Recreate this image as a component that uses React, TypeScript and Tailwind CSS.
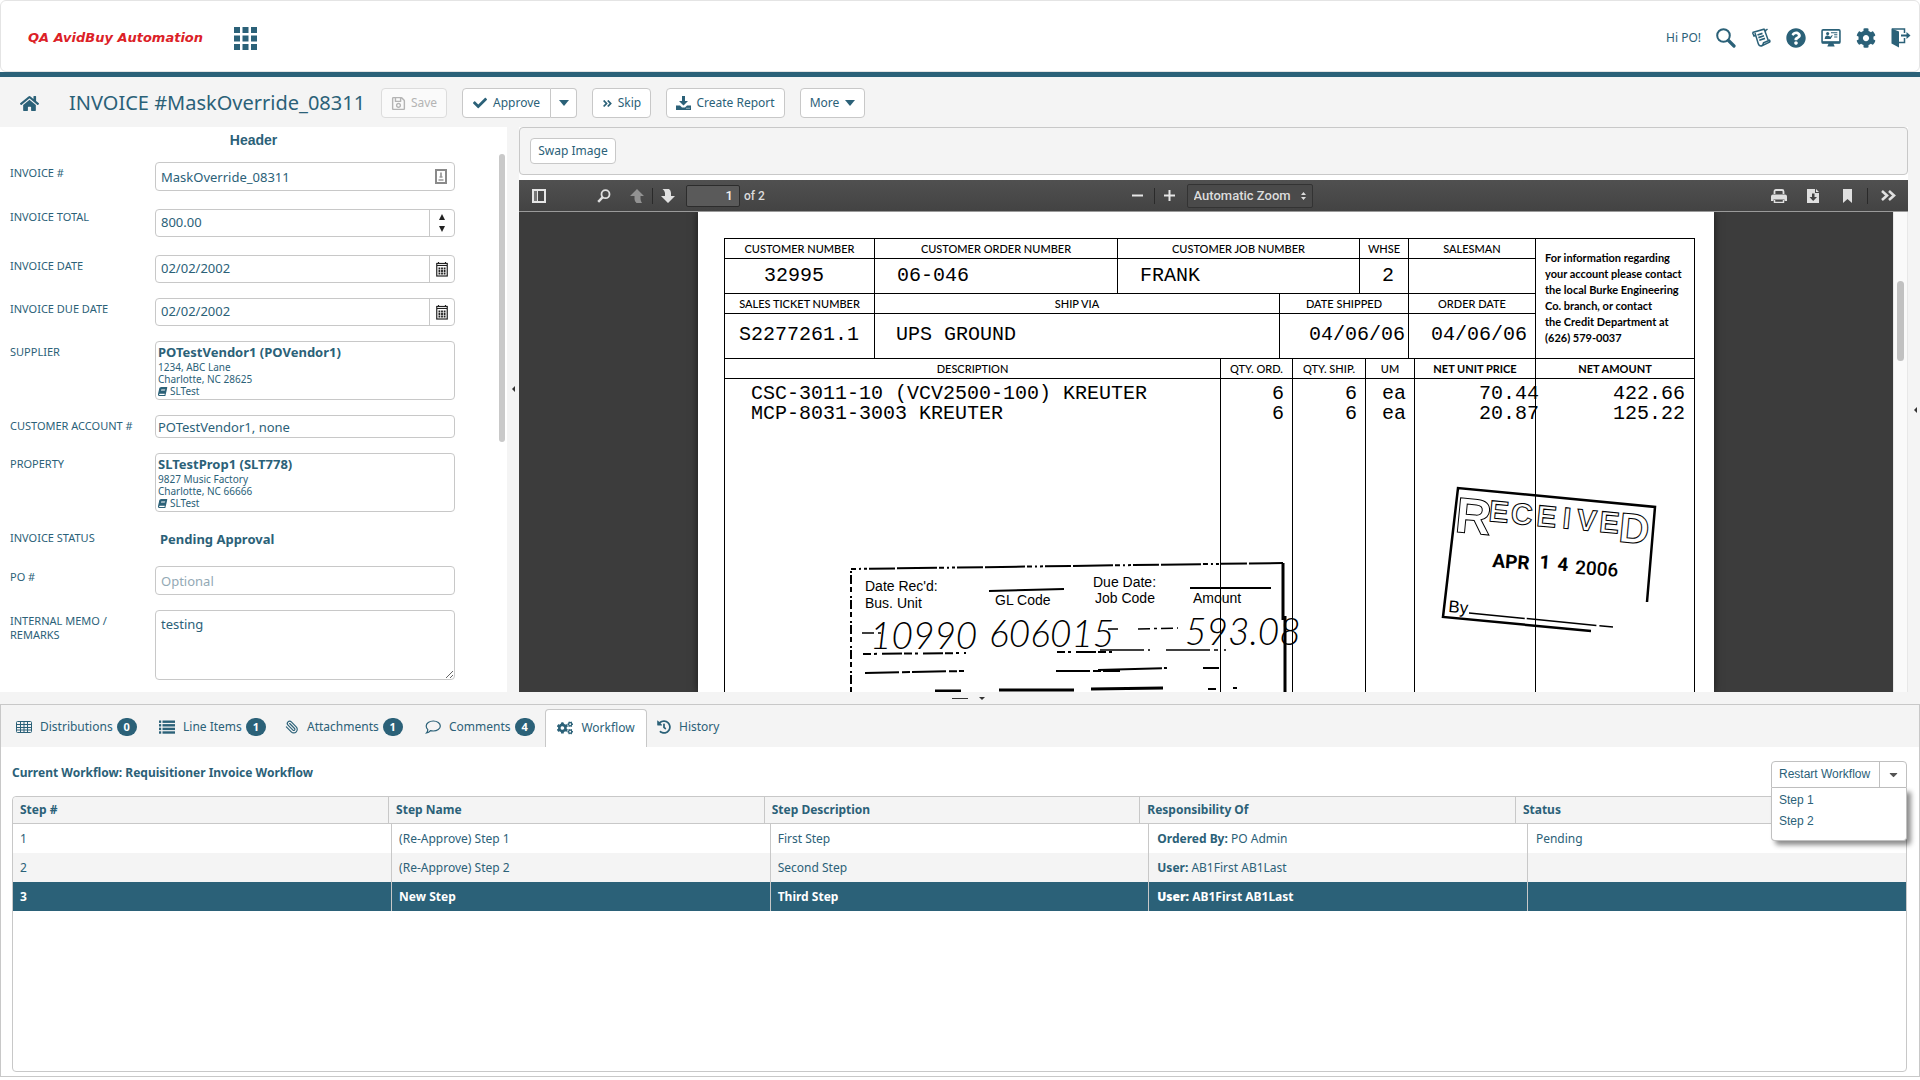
import React from "react";
import {
  FaHome,
  FaRegSave,
  FaCheck,
  FaAngleDoubleRight,
  FaCogs,
  FaHistory,
  FaBook,
  FaQuestionCircle,
  FaCog,
  FaCaretDown,
} from "react-icons/fa";
import { Paperclip } from "lucide-react";

type IconProps = { className?: string };

const GridIcon = ({ className }: IconProps) => (
  <svg viewBox="0 0 23 23" className={className} fill="currentColor">
    {[0, 8.5, 17].map((y) => [0, 8.5, 17].map((x) => <rect key={`${x}-${y}`} x={x} y={y} width="6" height="6" />))}
  </svg>
);

const SearchIcon = ({ className }: IconProps) => (
  <svg viewBox="0 0 20 20" className={className} fill="none" stroke="currentColor">
    <circle cx="7.5" cy="7.5" r="6.3" strokeWidth="2" />
    <path d="M12.5 12.5 18 18" strokeWidth="3.2" strokeLinecap="round" />
  </svg>
);

const ScrollIcon = ({ className }: IconProps) => (
  <svg viewBox="0 0 20 20" className={className} fill="none" stroke="currentColor" strokeWidth="1.5">
    <path d="M1.500 4.500 3 8l1.500-.5M1.500 4.500 13 1.200l2 2.300M4 5l3.200 10.500q.8 2.800 3.300 2.500l8-3.800q.8-.7 0-2l-6 2.600q-.5 3-2.500 3.200M13.500 2l2 5.500 1.700 4.700M13.500 3.500l3-2.500" />
    <path d="m6.500 7 5-1.600M7.400 9.600l5.600-1.800M8.300 12.200l5.700-1.800" strokeWidth="1.700" />
  </svg>
);

const MonitorIcon = ({ className }: IconProps) => (
  <svg viewBox="0 0 19 19" className={className} fill="none" stroke="currentColor">
    <rect x="1" y="1.800" width="17" height="12.400" rx="1" strokeWidth="1.500" />
    <path d="M1 13.500h17" strokeWidth="2" />
    <path d="M7.500 14h4l1.500 3.500H6z" fill="currentColor" stroke="none" />
    <circle cx="6.300" cy="5.300" r="1.500" fill="currentColor" stroke="none" />
    <path d="M3.500 10.500q.3-3.500 3-3.300l2.500 1.200 1.500-1.800.6.600-2 3.300z" fill="currentColor" stroke="none" />
    <path d="M9.500 4.500h6M12.500 6.500h3M12.500 8.500h3" strokeWidth="1" />
  </svg>
);

const ExitIcon = ({ className }: IconProps) => (
  <svg viewBox="0 0 20 20" className={className} fill="none" stroke="currentColor">
    <path d="M.5.500 8 3.500V19.500L.5 15.500z" fill="currentColor" stroke="none" />
    <path d="M1 1h12.500v4M13.500 10v4.500H8" strokeWidth="1.500" />
    <path d="M10 7.500h7" strokeWidth="2" />
    <path d="m15.500 4 4 3.500-4 3.500z" fill="currentColor" stroke="none" />
  </svg>
);

const DownloadTrayIcon = ({ className }: IconProps) => (
  <svg viewBox="0 0 15 15" className={className} fill="currentColor">
    <path d="M6 0h3v5h3L7.500 9.500 3 5h3z" />
    <path d="M0 9.500h4l2 2h3l2-2h4V14H0zM10.500 11.700v1h1v-1zm2 0v1h1v-1z" fillRule="evenodd" />
  </svg>
);

const TableGridIcon = ({ className }: IconProps) => (
  <svg viewBox="0 0 16 14" className={className} fill="none" stroke="currentColor" strokeWidth="1">
    <rect x=".5" y="1.500" width="15" height="11" rx="1" />
    <path d="M.5 4.500h15M.5 7.500h15M.5 10h15M4.500 1.500v11M8 1.500v11M11.500 1.500v11" />
  </svg>
);

const ListIcon = ({ className }: IconProps) => (
  <svg viewBox="0 0 16 14" className={className} fill="currentColor">
    {[0.5, 4.1, 7.7, 11.3].map((y) => (
      <g key={y}>
        <rect x="0" y={y} width="2.200" height="2.400" />
        <rect x="3.500" y={y} width="12.500" height="2.400" />
      </g>
    ))}
  </svg>
);

const BubbleIcon = ({ className }: IconProps) => (
  <svg viewBox="0 0 16 14" className={className} fill="none" stroke="currentColor" strokeWidth="1.200">
    <path d="M8.300 1C12.300 1 15.300 3.200 15.300 6s-3 5-7 5q-1.500 0-2.800-.4Q3.800 12.700 1.500 13q1.200-1.200 1.300-3.400Q1.200 8.100 1.200 6c0-2.800 3.100-5 7.100-5z" />
  </svg>
);

const CalendarIcon = ({ className }: IconProps) => (
  <svg viewBox="0 0 12 15" className={className} fill="none" stroke="#222">
    <rect x=".75" y="1.500" width="10.500" height="12.500" strokeWidth="1.200" />
    <path d="M1 3.500h10M2.500 0v2M9.500 0v2" strokeWidth="1.200" />
    <path d="M2.500 6.500h7M2.500 9h7M2.500 11.500h7" strokeWidth="1.800" strokeDasharray="1.800 .8" />
  </svg>
);

const ContactCardIcon = ({ className }: IconProps) => (
  <svg viewBox="0 0 12 15" className={className} fill="none">
    <rect x="1" y="1" width="10" height="13" fill="#fff" stroke="#8a8a8a" strokeWidth="2" />
    <path d="M6 3.500v5M4.500 8h3M3.500 11h5" stroke="#999" strokeWidth="1.700" />
  </svg>
);

const SidebarIcon = ({ className }: IconProps) => (
  <svg viewBox="0 0 14 14" className={className} fill="none">
    <rect x="1" y="1" width="12" height="12" stroke="#e6e6e6" strokeWidth="2" />
    <path d="M5.500 1v12" stroke="#e6e6e6" />
    <rect x="2" y="2" width="3" height="10" fill="#777" />
  </svg>
);

const FindIcon = ({ className }: IconProps) => (
  <svg viewBox="0 0 14 14" className={className} fill="none" stroke="#e0e0e0">
    <circle cx="8.500" cy="5.200" r="4" strokeWidth="1.800" />
    <path d="M5.500 8.300 1.200 12.800" strokeWidth="2.400" />
  </svg>
);

const PageUpIcon = ({ className }: IconProps) => (
  <svg viewBox="0 0 14 14" className={className} fill="#929292">
    <path d="M7 0 14 7h-3.500v3q.2 2.500 1.500 4H6.500q-2-1.500-2-4V7H0z" />
  </svg>
);

const PageDownIcon = ({ className }: IconProps) => (
  <svg viewBox="0 0 14 14" className={className} fill="#e0e0e0">
    <path d="M7 14 0 7h4V4Q3.700 1.500 1.500 0H8q2 1.500 2 4v3h4z" />
  </svg>
);

const PrinterIcon = ({ className }: IconProps) => (
  <svg viewBox="0 0 16 14" className={className}>
    <path d="M3.500 5V2.500q0-1.500 1.500-1.500h6q1.500 0 1.500 1.500V5" fill="none" stroke="#e0e0e0" strokeWidth="1.800" />
    <path d="M0 7.500q0-2 2-2h12q2 0 2 2V12h-2.500V10.500h-11V12H0z" fill="#e0e0e0" />
    <path d="M3.500 11v2.500h9V11" fill="none" stroke="#e0e0e0" strokeWidth="1.500" />
  </svg>
);

const SaveFileIcon = ({ className }: IconProps) => (
  <svg viewBox="0 0 12 14" className={className}>
    <path d="M0 0h8v4h4v10H0zM9 0l3 3H9z" fill="#e0e0e0" />
    <path d="M5 4.500h2.500V8H10l-3.800 4L2.500 8H5z" fill="#444" />
  </svg>
);

const BookmarkIcon = ({ className }: IconProps) => (
  <svg viewBox="0 0 9 14" className={className}>
    <path d="M0 0h9v14L4.500 10 0 14z" fill="#e0e0e0" />
  </svg>
);

const ToolsIcon = ({ className }: IconProps) => (
  <svg viewBox="0 0 15 11" className={className} fill="none" stroke="#e0e0e0" strokeWidth="2.600">
    <path d="m1 1 5 4.500-5 4.500M8 1l5 4.500L8 10" />
  </svg>
);

const DownTriangle = () => (
  <svg viewBox="0 0 10 6" className="h-[6px] w-[10px]" fill="currentColor">
    <path d="M0 0h10L5 6z" />
  </svg>
);

const btn =
  "flex items-center justify-center rounded border border-[#c8c8c8] bg-white text-[12px] text-[#2b6178] whitespace-nowrap";
const field = "w-full rounded border border-[#c8c8c8] bg-white px-[5px] text-[13px] text-[#2b6178] outline-none";

function TopBar() {
  return (
    <header className="border-b-[5px] border-[#2b6178] bg-white">
      <div className="flex h-[72px] items-center rounded-md border border-[#e4e4e4] pt-1 pr-2 pl-[27px]">
        <span className="w-[206px] text-[13px] font-bold whitespace-nowrap text-[#dc2127] italic font-['DejaVu_Sans']">
          QA AvidBuy Automation
        </span>
        <button aria-label="Applications" className="text-[#2b6178]">
          <GridIcon className="size-[23px]" />
        </button>
        <nav className="ml-auto flex items-center gap-[15px] text-[#2b6178]">
          <span className="text-[12px]">Hi PO!</span>
          <button aria-label="Search"><SearchIcon className="size-5" /></button>
          <button aria-label="Notes"><ScrollIcon className="size-5" /></button>
          <button aria-label="Help"><FaQuestionCircle className="size-5" /></button>
          <button aria-label="Training"><MonitorIcon className="size-5" /></button>
          <button aria-label="Settings"><FaCog className="size-5" /></button>
          <button aria-label="Log out"><ExitIcon className="size-5" /></button>
        </nav>
      </div>
    </header>
  );
}

function ActionBar() {
  return (
    <div className="flex h-[50px] items-center pt-[2px] pl-5">
      <a href="#home" aria-label="Home" className="text-[#2b6178]">
        <FaHome className="size-[19px]" />
      </a>
      <h1 className="ml-[30px] w-[312px] text-[20px] whitespace-nowrap text-[#2b6178]">INVOICE #MaskOverride_08311</h1>
      <div className="flex gap-[15px]">
        <button
          disabled
          className="flex h-[30px] w-[66px] items-center justify-center gap-[5px] rounded border border-[#dcdcdc] bg-[#fafafa] text-[12px] text-[#b4b4b4]"
        >
          <FaRegSave className="size-[15px]" /> Save
        </button>
        <div className="flex">
          <button className={`${btn} h-[30px] w-[89px] gap-[6px] rounded-r-none`}>
            <FaCheck className="size-[14px]" /> Approve
          </button>
          <button aria-label="More approve options" className={`${btn} h-[30px] w-[26px] rounded-l-none border-l-0`}>
            <DownTriangle />
          </button>
        </div>
        <button className={`${btn} h-[30px] w-[59px] gap-[5px]`}>
          <FaAngleDoubleRight className="size-[11px]" /> Skip
        </button>
        <button className={`${btn} h-[30px] w-[119px] gap-[5px]`}>
          <DownloadTrayIcon className="size-[15px]" /> Create Report
        </button>
        <button className={`${btn} h-[30px] w-[65px] gap-[6px]`}>
          More <DownTriangle />
        </button>
      </div>
    </div>
  );
}

function Row({ label, id, children, tight }: { label: string; id?: string; children: React.ReactNode; tight?: boolean }) {
  const cls = `text-[11px] leading-[14px] pr-[18px] ${tight ? "pt-px" : "pt-1"}`;
  return (
    <div className="grid grid-cols-[145px_300px] items-start">
      {id ? (
        <label htmlFor={id} className={cls}>{label}</label>
      ) : (
        <span className={cls}>{label}</span>
      )}
      {children}
    </div>
  );
}

function PartyCard({ name, lines }: { name: string; lines: string[] }) {
  return (
    <div className="h-[59px] rounded border border-[#c8c8c8] px-[2px] pt-[2px]">
      <div className="text-[13px] leading-[17px] font-bold">{name}</div>
      {lines.map((l) => (
        <div key={l} className="text-[10px] leading-3">{l}</div>
      ))}
      <div className="flex items-center gap-[3px] text-[10px] leading-3">
        <FaBook className="size-[9px] -skew-x-12" /> SLTest
      </div>
    </div>
  );
}

function DateField({ id }: { id: string }) {
  return (
    <div className="flex h-7 rounded border border-[#c8c8c8]">
      <input id={id} defaultValue="02/02/2002" className="min-w-0 flex-1 px-[5px] text-[13px] outline-none" />
      <button aria-label="Open calendar" className="flex w-[25px] items-center justify-center border-l border-[#c8c8c8]">
        <CalendarIcon className="h-[15px] w-3" />
      </button>
    </div>
  );
}

function InvoiceForm() {
  return (
    <section className="relative w-[507px] shrink-0 bg-white pt-[3px] pb-3 pl-[10px] text-[#2b6178]">
      <h2 className="pr-[10px] text-center text-[14px] leading-5 font-bold font-['Liberation_Sans']">Header</h2>
      <div className="mt-3 flex flex-col gap-[15px]">
        <div className="flex flex-col gap-[18px]">
          <Row label="INVOICE #" id="inv">
            <div className="relative">
              <input id="inv" defaultValue="MaskOverride_08311" className={`${field} block h-[29px]`} />
              <ContactCardIcon className="absolute top-[7px] right-2 h-[15px] w-3" />
            </div>
          </Row>
          <Row label="INVOICE TOTAL" id="total" tight>
            <div className="flex h-7 overflow-hidden rounded border border-[#c8c8c8]">
              <input id="total" defaultValue="800.00" className="min-w-0 flex-1 px-[5px] text-[13px] outline-none" />
              <div className="flex w-[25px] flex-col items-center justify-center gap-[6px] border-l border-[#c8c8c8]">
                <button aria-label="Increase">
                  <svg viewBox="0 0 6 6" className="block size-[6px]" fill="#222"><path d="M3 0l3 6H0z" /></svg>
                </button>
                <button aria-label="Decrease">
                  <svg viewBox="0 0 6 6" className="block size-[6px]" fill="#222"><path d="M3 6l3-6H0z" /></svg>
                </button>
              </div>
            </div>
          </Row>
          <Row label="INVOICE DATE" id="date">
            <DateField id="date" />
          </Row>
        </div>
        <Row label="INVOICE DUE DATE" id="due">
          <DateField id="due" />
        </Row>
        <Row label="SUPPLIER">
          <PartyCard name="POTestVendor1 (POVendor1)" lines={["1234, ABC Lane", "Charlotte, NC 28625"]} />
        </Row>
        <Row label="CUSTOMER ACCOUNT #" id="acct">
          <input id="acct" defaultValue="POTestVendor1, none" className="h-[23px] w-full rounded border border-[#c8c8c8] px-[2px] text-[13px] outline-none" />
        </Row>
        <Row label="PROPERTY">
          <PartyCard name="SLTestProp1 (SLT778)" lines={["9827 Music Factory", "Charlotte, NC 66666"]} />
        </Row>
        <Row label="INVOICE STATUS">
          <div className="px-[5px] text-[13px] leading-6 font-bold">Pending Approval</div>
        </Row>
        <Row label="PO #" id="po">
          <input id="po" placeholder="Optional" className={`${field} h-[29px] placeholder:text-[#93a9b5]`} />
        </Row>
        <Row label="INTERNAL MEMO / REMARKS" id="memo">
          <textarea id="memo" defaultValue="testing" className={`${field} block h-[70px] py-1 leading-[18px]`} />
        </Row>
      </div>
      <div className="absolute top-[27px] right-[2px] h-[288px] w-[6px] rounded-full bg-[#c9c9c9]" />
    </section>
  );
}

function ViewerToolbar() {
  const sep = "h-4 w-px bg-[#2a2a2a]";
  return (
    <div className="flex h-8 shrink-0 items-center border-b border-[#9a9a9a] bg-linear-to-b from-[#505050] to-[#434343] pr-3 pl-[13px] text-[13px] font-medium text-[#dcdcdc] font-['Roboto']">
      <div className="flex flex-1 items-center">
        <button aria-label="Toggle sidebar"><SidebarIcon className="size-[14px]" /></button>
        <button aria-label="Find" className="ml-[51px]"><FindIcon className="size-[14px]" /></button>
        <button aria-label="Previous page" className="ml-[19px]"><PageUpIcon className="size-[14px]" /></button>
        <span className={`${sep} ml-2`} />
        <button aria-label="Next page" className="ml-2"><PageDownIcon className="size-[14px]" /></button>
        <input aria-label="Page" defaultValue="1" className="ml-[11px] h-[22px] w-[54px] rounded-xs border border-[#2c2c2c] bg-[#5a5a5a] pr-[6px] text-right text-[#f0f0f0] outline-none" />
        <span className="ml-1 text-[12px]">of 2</span>
      </div>
      <div className="flex items-center pl-4">
        <button aria-label="Zoom out">
          <svg viewBox="0 0 11 11" className="block size-[11px]"><path d="M0 5.500h11" stroke="#e6e6e6" strokeWidth="2" /></svg>
        </button>
        <span className={`${sep} ml-[11px]`} />
        <button aria-label="Zoom in" className="ml-[9px]">
          <svg viewBox="0 0 11 11" className="block size-[11px]"><path d="M0 5.500h11M5.500 0v11" stroke="#e6e6e6" strokeWidth="2" /></svg>
        </button>
        <div className="relative ml-3 w-[126px]">
          <select aria-label="Zoom" className="block h-6 w-full appearance-none rounded-xs border border-[#333] bg-[#4a4a4a] pl-[6px] leading-[22px] outline-none">
            <option>Automatic Zoom</option>
          </select>
          <svg viewBox="0 0 5 8" className="pointer-events-none absolute top-2 right-[7px] h-2 w-[5px]" fill="#ddd">
            <path d="M2.500 0 5 3H0zM2.500 8 5 5H0z" />
          </svg>
        </div>
      </div>
      <div className="flex flex-1 items-center justify-end">
        <button aria-label="Print"><PrinterIcon className="h-[14px] w-4" /></button>
        <button aria-label="Download" className="ml-5"><SaveFileIcon className="h-[14px] w-3" /></button>
        <button aria-label="Bookmark" className="ml-6"><BookmarkIcon className="h-[14px] w-[9px]" /></button>
        <span className={`${sep} ml-[15px]`} />
        <button aria-label="Tools" className="ml-[13px]"><ToolsIcon className="h-[11px] w-[15px]" /></button>
      </div>
    </div>
  );
}

const docHead = "flex h-5 items-center justify-center border-b border-r border-black";
const docCell = "border-b border-r border-black font-['Liberation_Mono'] text-[20px] whitespace-pre";

function ScannedInvoice() {
  return (
    <div className="relative mx-auto flex h-full w-[1016px] flex-col bg-white pt-[26px] pl-[26px] text-[11px] leading-none text-black shadow-[0_0_8px_rgba(0,0,0,0.6)] font-['Lato'] font-medium">
      <div className="flex w-[971px] border-t border-l border-black">
        <div>
          <div className="grid grid-cols-[150px_243px_242px_49px_127px]">
            <div className={docHead}>CUSTOMER NUMBER</div>
            <div className={docHead}>CUSTOMER ORDER NUMBER</div>
            <div className={docHead}>CUSTOMER JOB NUMBER</div>
            <div className={docHead}>WHSE</div>
            <div className={docHead}>SALESMAN</div>
            <div className={`${docCell} h-[35px] pt-[3px] pl-[39px] leading-7`}>32995</div>
            <div className={`${docCell} pt-[3px] pl-[22px] leading-7`}>06-046</div>
            <div className={`${docCell} pt-[3px] pl-[22px] leading-7`}>FRANK</div>
            <div className={`${docCell} pt-[3px] pl-[22px] leading-7`}>2</div>
            <div className={docCell} />
          </div>
          <div className="grid grid-cols-[150px_405px_129px_127px]">
            <div className={docHead}>SALES TICKET NUMBER</div>
            <div className={docHead}>SHIP VIA</div>
            <div className={docHead}>DATE SHIPPED</div>
            <div className={docHead}>ORDER DATE</div>
            <div className={`${docCell} h-[45px] pl-[14px] leading-[42px]`}>S2277261.1</div>
            <div className={`${docCell} pl-[21px] leading-[42px]`}>UPS GROUND</div>
            <div className={`${docCell} pl-[29px] leading-[42px]`}>04/06/06</div>
            <div className={`${docCell} pl-[22px] leading-[42px]`}>04/06/06</div>
          </div>
        </div>
        <p className="flex-1 border-r border-b border-black pt-[11px] pl-[9px] leading-4 font-bold whitespace-nowrap">
          For information regarding<br />your account please contact<br />the local Burke Engineering<br />
          Co. branch, or contact<br />the Credit Department at<br />(626) 579-0037
        </p>
      </div>
      <div className="grid w-[971px] flex-1 grid-cols-[496px_72px_73px_49px_121px_1fr] grid-rows-[20px_1fr] border-l border-black">
        <div className={docHead}>DESCRIPTION</div>
        <div className={docHead}>QTY. ORD.</div>
        <div className={docHead}>QTY. SHIP.</div>
        <div className={docHead}>UM</div>
        <div className={`${docHead} font-bold`}>NET UNIT PRICE</div>
        <div className={`${docHead} font-bold`}>NET AMOUNT</div>
        <div className={`${docCell} border-b-0 pt-[5px] pl-[26px] leading-5`}>{"CSC-3011-10 (VCV2500-100) KREUTER\nMCP-8031-3003 KREUTER"}</div>
        <div className={`${docCell} border-b-0 pt-[5px] pr-2 text-right leading-5`}>{"6\n6"}</div>
        <div className={`${docCell} border-b-0 pt-[5px] pr-2 text-right leading-5`}>{"6\n6"}</div>
        <div className={`${docCell} border-b-0 pt-[5px] pr-2 text-right leading-5`}>{"ea\nea"}</div>
        <div className={`${docCell} border-b-0 pt-[5px] pl-16 leading-5`}>{"70.44\n20.87"}</div>
        <div className={`${docCell} border-b-0 pt-[5px] pr-[9px] text-right leading-5`}>{"422.66\n125.22"}</div>
      </div>

      {/* Ink stamps and handwriting over the form */}
      <svg viewBox="0 0 1016 480" className="pointer-events-none absolute top-0 left-0 h-[480px] w-[1016px]" fill="none" stroke="#000">
        <g strokeWidth="2">
          <path d="M153 480V357" strokeDasharray="5 3 9 2 2 4" />
          <path d="M153 357 585 351" strokeDasharray="5 3 2 3 3 2 26 2 40 2" />
          <path d="M585 351V408M587 404V480" strokeWidth="3" />
          <path d="M291 379 366 377M492 376h81" />
          <path d="M164 421h20M410 417h10M440 417l40-1" strokeDasharray="12 4 3 4" strokeWidth="1.500" />
          <path d="M165 442 268 441M359 440h60" strokeDasharray="8 3 3 5 20 2" />
          <path d="M402 438h50M468 438h60" strokeDasharray="44 4 4 6" strokeWidth="1.500" />
          <path d="M167 461 266 459M358 459h64" strokeDasharray="34 3 8 2" />
          <path d="M400 458 470 456M505 456h16" strokeDasharray="64 2 3 2" />
          <path d="M237 479h26M301 478h75M393 477l72-1" strokeWidth="3" />
          <path d="M510 477h8M535 476h4" />
        </g>
        <g fill="#000" stroke="none" fontFamily="Liberation Sans" fontSize="14">
          <text x="167" y="379">Date Rec'd:</text>
          <text x="167" y="396">Bus. Unit</text>
          <text x="297" y="393">GL Code</text>
          <text x="395" y="375">Due Date:</text>
          <text x="397" y="391">Job Code</text>
          <text x="495" y="391">Amount</text>
        </g>
        <g fill="#000" stroke="none" fontFamily="Lato" fontStyle="italic" fontWeight="300" fontSize="37">
          <text x="172" y="437">10990</text>
          <text x="291" y="435">606015</text>
          <text x="487" y="433">593.08</text>
        </g>
        <path d="M949 390 957 295 760 276 745 405 893 419" strokeWidth="2.500" />
        <path d="M771 401 915 415" strokeWidth="1.500" strokeDasharray="56 2 70 3" />
        <g transform="translate(760 277) rotate(5.500)" fontFamily="Liberation Sans" fontWeight="700" strokeWidth="1">
          <text x="0" y="43" fontSize="50">R</text>
          <text x="33" y="29" fontSize="30">E</text>
          <text x="55" y="29" fontSize="30">C</text>
          <text x="81" y="29" fontSize="30">E</text>
          <text x="107" y="29" fontSize="30">I</text>
          <text x="121" y="29" fontSize="30">V</text>
          <text x="144" y="29" fontSize="30">E</text>
          <text x="164" y="37" fontSize="42">D</text>
        </g>
        <g transform="translate(794 355) rotate(4)" fill="#000" stroke="none" fontFamily="Roboto" fontWeight="700" fontSize="19">
          <text x="0" y="0">APR</text>
          <text x="47" y="-2">1</text>
          <text x="65" y="-1">4</text>
          <text x="83" y="1" fontWeight="500">2006</text>
        </g>
        <text x="750" y="400" transform="rotate(5 750 400)" fill="#000" stroke="none" fontFamily="Liberation Sans" fontSize="17">By</text>
      </svg>
    </div>
  );
}

function Viewer() {
  return (
    <section className="flex min-w-0 flex-1 flex-col bg-white">
      <div className="flex h-12 shrink-0 items-center rounded border border-[#c8c8c8] bg-[#f4f4f4] pl-[10px]">
        <button className={`${btn} h-[26px] w-[86px]`}>Swap Image</button>
      </div>
      <div className="mt-[5px] flex min-h-0 flex-1 flex-col bg-[#3c3c3c]">
        <ViewerToolbar />
        <div className="flex min-h-0 flex-1">
          <div className="min-w-0 flex-1 overflow-hidden"><ScannedInvoice /></div>
          <div className="w-[15px] border-x border-[#e8e8e8] bg-[#fafafa] px-[3px] pt-[69px]">
            <div className="h-20 rounded-full bg-[#c1c1c1]" />
          </div>
        </div>
      </div>
    </section>
  );
}

const tabs = [
  { label: "Distributions", icon: <TableGridIcon className="h-[14px] w-4" />, count: 0, width: "w-[143px]" },
  { label: "Line Items", icon: <ListIcon className="h-[14px] w-4" />, count: 1, width: "w-[126px]" },
  { label: "Attachments", icon: <Paperclip className="size-[14px] -scale-x-100" />, count: 1, width: "w-[140px]" },
  { label: "Comments", icon: <BubbleIcon className="h-[14px] w-4" />, count: 4, width: "w-[120px]" },
];

function Tabs() {
  return (
    <div role="tablist" className="flex h-[42px] items-end bg-[#f4f4f4] pl-[15px] text-[12px]">
      {tabs.map((t) => (
        <button key={t.label} role="tab" className={`flex h-[38px] ${t.width} items-center pb-[2px] whitespace-nowrap`}>
          {t.icon}
          <span className="ml-2">{t.label}</span>
          <span className="ml-1 flex h-[18px] w-5 items-center justify-center rounded-full bg-[#2b6178] text-[11px] font-bold text-white">
            {t.count}
          </span>
        </button>
      ))}
      <button role="tab" aria-selected="true" className="flex h-[38px] w-[102px] items-center justify-center gap-2 rounded-t border border-b-0 border-[#c8c8c8] bg-white pb-[2px]">
        <FaCogs className="size-4" />
        Workflow
      </button>
      <button role="tab" className="flex h-[38px] items-center gap-2 pb-[2px] pl-[10px]">
        <FaHistory className="size-[14px]" />
        History
      </button>
    </div>
  );
}

const columns = ["Step #", "Step Name", "Step Description", "Responsibility Of", "Status"];

const steps = [
  { n: "1", name: "(Re-Approve) Step 1", desc: "First Step", role: "Ordered By:", who: "PO Admin", status: "Pending" },
  { n: "2", name: "(Re-Approve) Step 2", desc: "Second Step", role: "User:", who: "AB1First AB1Last", status: "" },
  { n: "3", name: "New Step", desc: "Third Step", role: "User:", who: "AB1First AB1Last", status: "" },
];

function WorkflowTable() {
  return (
    <div className="flex-1 rounded border border-[#c8c8c8] text-[12px]">
      <div className="rounded-t border-b border-[#c8c8c8] bg-[#f4f4f4] pr-[15px]">
        <table className="w-full table-fixed border-collapse">
          <thead>
            <tr className="h-[26px]">
              {columns.map((h) => (
                <th key={h} scope="col" className="border-r border-[#c8c8c8] pl-[7px] text-left font-bold last:border-r-0">
                  {h}
                </th>
              ))}
            </tr>
          </thead>
        </table>
      </div>
      <table className="w-full table-fixed border-collapse">
        <tbody>
          {steps.map((s, i) => (
            <tr
              key={s.n}
              className={`h-[29px] ${i === 2 ? "bg-[#2b6178] font-bold text-white" : i === 1 ? "bg-[#f4f4f4]" : "bg-white"}`}
            >
              <td className="border-r border-[#c8c8c8] pl-[7px]">{s.n}</td>
              <td className="border-r border-[#c8c8c8] pl-[7px]">{s.name}</td>
              <td className="border-r border-[#c8c8c8] pl-[7px]">{s.desc}</td>
              <td className="border-r border-[#c8c8c8] pl-2">
                <b>{s.role}</b> {s.who}
              </td>
              <td className="pl-2">{s.status}</td>
            </tr>
          ))}
        </tbody>
      </table>
    </div>
  );
}

function RestartMenu() {
  return (
    <div className="relative w-[136px] text-[12px] font-['Liberation_Sans']">
      <div className="flex h-[27px] rounded-t border border-[#c0c0c0] bg-white">
        <button className="flex-1 border-r border-[#c0c0c0] pb-[2px] pl-[7px] text-left">Restart Workflow</button>
        <button aria-label="Restart options" className="flex w-[26px] items-center justify-center text-[#555]">
          <FaCaretDown className="size-[13px]" />
        </button>
      </div>
      <div className="absolute top-[27px] left-0 h-[53px] w-full rounded-b border border-t-0 border-[#c0c0c0] bg-white pt-[2px] shadow-[4px_4px_5px_rgba(0,0,0,0.45)]">
        <a href="#step-1" className="block pl-[7px] leading-[21px]">Step 1</a>
        <a href="#step-2" className="block pl-[7px] leading-[21px]">Step 2</a>
      </div>
    </div>
  );
}

export default function App() {
  return (
    <div className="flex min-h-screen flex-col bg-[#f4f4f4] font-['Noto_Sans',sans-serif] text-[#2b6178]">
      <TopBar />
      <ActionBar />
      <main className="flex">
        <InvoiceForm />
        <div className="flex w-3 items-center justify-center pb-[42px]">
          <svg viewBox="0 0 3 6" className="h-[6px] w-[3px]" fill="#333"><path d="M3 0v6L0 3z" /></svg>
        </div>
        <Viewer />
        <div className="flex w-3 items-center justify-end pr-[3px]">
          <svg viewBox="0 0 3 6" className="h-[6px] w-[3px]" fill="#333"><path d="M3 0v6L0 3z" /></svg>
        </div>
      </main>
      <div className="flex h-3 items-center justify-center gap-[11px] pl-4">
        <span className="h-px w-4 bg-[#333]" />
        <svg viewBox="0 0 6 3" className="h-[3px] w-[6px]" fill="#333"><path d="M0 0h6L3 3z" /></svg>
      </div>
      <section className="flex flex-1 flex-col border border-[#c8c8c8] bg-white">
        <Tabs />
        <div className="flex flex-1 flex-col pr-3 pb-1 pl-[11px]">
          <div className="z-10 flex h-[49px] items-start justify-between pt-[14px]">
            <h3 className="text-[12px] leading-6 font-bold">Current Workflow: Requisitioner Invoice Workflow</h3>
            <RestartMenu />
          </div>
          <WorkflowTable />
        </div>
      </section>
      <div className="h-[3px] bg-white" />
    </div>
  );
}
